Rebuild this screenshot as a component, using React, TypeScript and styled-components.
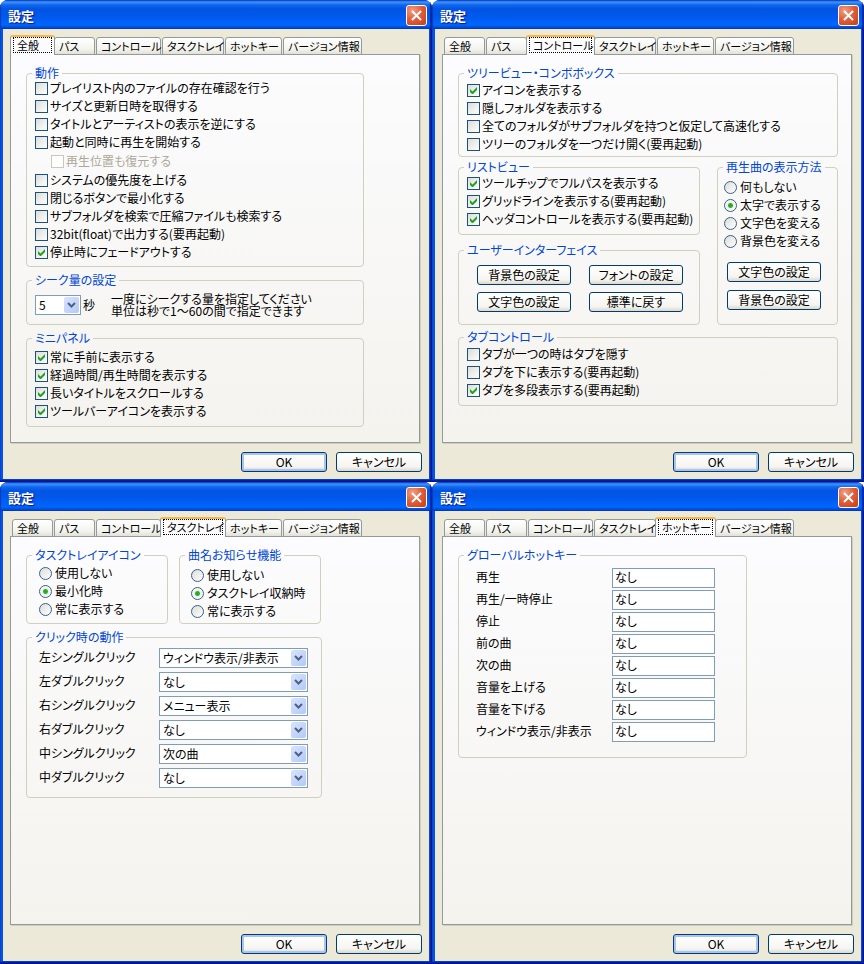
import React, { useId } from "react";
import styled, { createGlobalStyle, css } from "styled-components";

const GlobalStyle = createGlobalStyle`
  *, *::before, *::after { box-sizing: border-box; }
  body {
    margin: 0;
    background: #ffffff;
    color: #000000;
    font: 12px/18px "Noto Sans CJK JP", "Liberation Sans", sans-serif;
    font-feature-settings: "palt";
  }
  button, input, select {
    margin: 0;
    color: inherit;
    font: inherit;
    font-feature-settings: inherit;
  }
`;

const Desktop = styled.main`
  display: grid;
  grid-template-columns: repeat(2, minmax(0, 1fr));
  grid-auto-rows: 1fr;
  min-height: 100vh;
`;

const WindowFrame = styled.section`
  display: flex;
  flex-direction: column;
  border-radius: 8px 8px 0 0;
  overflow: hidden;
  background:
    linear-gradient(to top, #00138c 1px, #0029b0 2px, transparent 3px),
    linear-gradient(
      to right,
      #0831d9 0,
      #0855dd 1px,
      #0855dd calc(100% - 3px),
      #0441d8 calc(100% - 2px),
      #00138c calc(100% - 1px)
    );
`;

const TitleBar = styled.header`
  display: flex;
  align-items: center;
  justify-content: space-between;
  height: 29px;
  padding: 2px 5px 0 8px;
  background: linear-gradient(
    #0a3ab8 0,
    #3d95ff 2px,
    #1265ee 5px,
    #0054e3 9px,
    #0058ea 16px,
    #0066ff 25px,
    #0050dc 27px,
    #003cc0 29px
  );
  box-shadow: inset -2px 0 1px #0029a8, inset 1px 0 1px #0a3ab8;
`;

const WindowTitle = styled.h1`
  margin: 0;
  color: #ffffff;
  font-size: 13px;
  line-height: 18px;
  font-weight: 700;
  text-shadow: 1px 1px 1px #0a1883;
`;

const CloseButton = styled.button`
  display: grid;
  place-items: center;
  width: 21px;
  height: 21px;
  padding: 0;
  border: 1px solid #ffffff;
  border-radius: 3px;
  background: radial-gradient(circle at 30% 25%, #f0a088 0, #e0603c 45%, #c83c14 100%);
`;

const Client = styled.div`
  display: flex;
  flex: 1;
  flex-direction: column;
  margin: 0 3px 3px;
  padding: 6px 7px 7px;
  background: #ece9d8;
`;

const TabList = styled.div`
  display: flex;
  align-items: flex-end;
  height: 20px;
  margin: 0 2px -1px;
  position: relative;
`;

const Tab = styled.button<{ $width: number; $active: boolean }>`
  flex: none;
  width: ${(p) => p.$width}px;
  height: 18px;
  margin-right: 1px;
  padding: 0 0 0 4px;
  border: 1px solid #919b9c;
  border-radius: 3px 3px 0 0;
  background: linear-gradient(#ffffff, #f3f3ee 70%, #e2e1d6);
  font-size: 11px;
  line-height: 16px;
  text-align: left;
  white-space: nowrap;

  ${(p) =>
    p.$active &&
    css`
      width: ${p.$width + 4}px;
      height: 20px;
      margin: 0 -1px 0 -2px;
      padding: 0 2px 2px;
      border-top: 2px solid #ffb636;
      border-bottom: 0;
      background: #fcfcfe;
      line-height: 14px;
      z-index: 1;
    `}
`;

const FocusRing = styled.span`
  display: block;
  padding-left: 3px;
  border: 1px dotted #000000;
`;

const Panel = styled.div<{ $right: number }>`
  display: flex;
  flex: 1;
  flex-direction: column;
  align-items: stretch;
  margin-right: 2px;
  padding: 12px ${(p) => p.$right}px 12px 15px;
  border: 1px solid #919b9c;
  background: linear-gradient(#fcfcfe, #f4f3ee);
  box-shadow: 1px 1px 0 #d0cebf;
`;

const Footer = styled.footer`
  display: flex;
  justify-content: flex-end;
  gap: 9px;
  margin-top: 9px;
`;

const PushButton = styled.button<{ $width: number; $primary?: boolean }>`
  width: ${(p) => p.$width}px;
  height: 20px;
  padding: 0;
  border: 1px solid #003c74;
  border-radius: 3px;
  background: linear-gradient(#ffffff, #f6f5f1 75%, #dcd8cc);
  line-height: 16px;
  text-align: center;
  box-shadow: ${(p) => (p.$primary ? "inset 0 0 0 2px #a9c4f0" : "none")};
`;

const GroupBox = styled.fieldset<{ $gap?: number; $width?: number }>`
  min-width: 0;
  width: ${(p) => (p.$width ? `${p.$width}px` : "auto")};
  margin: ${(p) => p.$gap ?? 0}px 0 0;
  padding: 0 5px;
  border: 1px solid #d0d0bf;
  border-radius: 4px;
`;

const GroupTitle = styled.legend`
  height: 12px;
  padding: 0 3px;
  color: #0046d5;
  line-height: 12px;
`;

const Stack = styled.div<{ $top?: number; $bottom?: number; $left?: number }>`
  display: flex;
  flex-direction: column;
  padding: ${(p) => p.$top ?? 0}px 0 ${(p) => p.$bottom ?? 0}px ${(p) => p.$left ?? 3}px;
`;

const OptionLabel = styled.label<{ $sub?: boolean; $gap: number }>`
  display: flex;
  align-items: center;
  gap: ${(p) => p.$gap}px;
  height: ${(p) => (p.$sub ? 20 : 18)}px;
  padding-left: ${(p) => (p.$sub ? 16 : 0)}px;
  color: ${(p) => (p.$sub ? "#aca899" : "#000000")};
  white-space: nowrap;
`;

const TickFrame = styled.span`
  display: grid;
  flex: none;
  width: 13px;
  height: 13px;

  > * {
    grid-area: 1 / 1;
  }

  svg {
    visibility: hidden;
    pointer-events: none;
  }

  input:checked + svg {
    visibility: visible;
  }
`;

const TickBox = styled.input`
  appearance: none;
  width: 13px;
  height: 13px;
  border: 1px solid #1c5180;
  background: linear-gradient(135deg, #dcdcd7, #ffffff);

  &:disabled {
    border-color: #cac8bb;
    background: #ffffff;
  }
`;

const RadioDot = styled.input`
  appearance: none;
  flex: none;
  width: 13px;
  height: 13px;
  border: 1px solid #3a5f8c;
  border-radius: 50%;
  background: linear-gradient(135deg, #dcdcd7, #ffffff);

  &:checked {
    background: radial-gradient(circle, #21a121 0, #35b035 2px, #e9f1e6 3px, #f8faf6 5px);
  }
`;

const ComboFrame = styled.span<{ $width: number }>`
  display: grid;
  align-items: center;
  justify-items: end;
  width: ${(p) => p.$width}px;
  height: 20px;

  > * {
    grid-area: 1 / 1;
  }
`;

const ComboSelect = styled.select`
  appearance: none;
  width: 100%;
  height: 20px;
  padding: 0 18px 0 3px;
  border: 1px solid #7f9db9;
  border-radius: 0;
  background: #ffffff;
  line-height: 18px;
`;

const ComboArrow = styled.span`
  display: grid;
  place-items: center;
  width: 15px;
  height: 16px;
  margin-right: 2px;
  border-radius: 2px;
  background: linear-gradient(135deg, #d8e4ff, #b4c8f6);
  pointer-events: none;
`;

const SeekRow = styled.div`
  display: flex;
  align-items: center;
  padding: 7px 0 7px 3px;
`;

const UnitLabel = styled.label`
  padding-left: 2px;
`;

const SeekHint = styled.p`
  margin: 0 0 0 16px;
  line-height: 12px;
  white-space: nowrap;
`;

const ColumnPair = styled.div<{ $template: string; $gap: number; $top?: number }>`
  display: grid;
  grid-template-columns: ${(p) => p.$template};
  column-gap: ${(p) => p.$gap}px;
  margin-top: ${(p) => p.$top ?? 0}px;
`;

const ButtonGrid = styled.div`
  display: grid;
  grid-template-columns: repeat(2, 94px);
  gap: 7px 18px;
  padding: 9px 0 12px 13px;
`;

const ButtonColumn = styled.div`
  display: flex;
  flex-direction: column;
  gap: 8px;
  padding: 12px 0 0 3px;
`;

const FieldTable = styled.div<{ $label: number; $gap: number; $pad: string }>`
  display: grid;
  grid-template-columns: ${(p) => p.$label}px auto;
  grid-auto-rows: 20px;
  row-gap: ${(p) => p.$gap}px;
  justify-content: start;
  padding: ${(p) => p.$pad};
`;

const FieldLabel = styled.label`
  line-height: 18px;
  white-space: nowrap;
`;

const HotkeyInput = styled.input`
  width: 103px;
  height: 20px;
  padding: 0 2px 3px;
  border: 1px solid #7f9db9;
  background: #ffffff;
`;

const TABS = [
  { name: "全般", width: 41 },
  { name: "パス", width: 41 },
  { name: "コントロール", width: 65 },
  { name: "タスクトレイ", width: 62 },
  { name: "ホットキー", width: 57 },
  { name: "バージョン情報", width: 79 },
];

interface CheckProps {
  label: string;
  checked?: boolean;
  sub?: boolean;
}

function Check({ label, checked, sub }: CheckProps) {
  return (
    <OptionLabel $sub={sub} $gap={2}>
      <TickFrame>
        <TickBox type="checkbox" defaultChecked={checked} disabled={sub} />
        <svg width="13" height="13" viewBox="0 0 13 13" aria-hidden="true">
          <path d="M3 5v3l2 2h1l4-4V3L5.5 7.5z" fill="#21a121" />
        </svg>
      </TickFrame>
      {label}
    </OptionLabel>
  );
}

function RadioList({ options, selected }: { options: string[]; selected: number }) {
  const name = useId();
  return (
    <>
      {options.map((option, i) => (
        <OptionLabel key={option} $gap={3}>
          <RadioDot type="radio" name={name} defaultChecked={i === selected} />
          {option}
        </OptionLabel>
      ))}
    </>
  );
}

interface ComboProps {
  id: string;
  width: number;
  value: string;
  options: string[];
}

function Combo({ id, width, value, options }: ComboProps) {
  return (
    <ComboFrame $width={width}>
      <ComboSelect id={id} defaultValue={value}>
        {options.map((option) => (
          <option key={option}>{option}</option>
        ))}
      </ComboSelect>
      <ComboArrow>
        <svg width="9" height="6" viewBox="0 0 9 6" aria-hidden="true">
          <path d="M1 1l3.5 3.5L8 1" fill="none" stroke="#4d6185" strokeWidth="2" />
        </svg>
      </ComboArrow>
    </ComboFrame>
  );
}

interface DialogProps {
  active: number;
  right: number;
  children: React.ReactNode;
}

function Dialog({ active, right, children }: DialogProps) {
  return (
    <WindowFrame>
      <TitleBar>
        <WindowTitle>設定</WindowTitle>
        <CloseButton type="button" aria-label="閉じる">
          <svg width="13" height="13" viewBox="0 0 13 13" aria-hidden="true">
            <path d="M2 2l9 9M11 2l-9 9" stroke="#ffffff" strokeWidth="2" />
          </svg>
        </CloseButton>
      </TitleBar>
      <Client>
        <TabList role="tablist">
          {TABS.map((tab, i) => (
            <Tab
              key={tab.name}
              type="button"
              role="tab"
              aria-selected={i === active}
              $width={tab.width}
              $active={i === active}
            >
              {i === active ? <FocusRing>{tab.name}</FocusRing> : tab.name}
            </Tab>
          ))}
        </TabList>
        <Panel role="tabpanel" $right={right}>
          {children}
        </Panel>
        <Footer>
          <PushButton type="button" $width={86} $primary>
            OK
          </PushButton>
          <PushButton type="button" $width={86}>
            キャンセル
          </PushButton>
        </Footer>
      </Client>
    </WindowFrame>
  );
}

function GeneralPage() {
  return (
    <>
      <GroupBox>
        <GroupTitle>動作</GroupTitle>
        <Stack $bottom={5}>
          <Check label="プレイリスト内のファイルの存在確認を行う" />
          <Check label="サイズと更新日時を取得する" />
          <Check label="タイトルとアーティストの表示を逆にする" />
          <Check label="起動と同時に再生を開始する" />
          <Check label="再生位置も復元する" sub />
          <Check label="システムの優先度を上げる" />
          <Check label="閉じるボタンで最小化する" />
          <Check label="サブフォルダを検索で圧縮ファイルも検索する" />
          <Check label="32bit(float)で出力する(要再起動)" />
          <Check label="停止時にフェードアウトする" checked />
        </Stack>
      </GroupBox>
      <GroupBox $gap={7}>
        <GroupTitle>シーク量の設定</GroupTitle>
        <SeekRow>
          <Combo id="seek" width={46} value="5" options={["1", "5", "10", "30", "60"]} />
          <UnitLabel htmlFor="seek">秒</UnitLabel>
          <SeekHint>
            一度にシークする量を指定してください
            <br />
            単位は秒で1～60の間で指定できます
          </SeekHint>
        </SeekRow>
      </GroupBox>
      <GroupBox $gap={7}>
        <GroupTitle>ミニパネル</GroupTitle>
        <Stack $top={4} $bottom={6}>
          <Check label="常に手前に表示する" checked />
          <Check label="経過時間/再生時間を表示する" checked />
          <Check label="長いタイトルをスクロールする" checked />
          <Check label="ツールバーアイコンを表示する" checked />
        </Stack>
      </GroupBox>
    </>
  );
}

function ControlPage() {
  return (
    <>
      <GroupBox>
        <GroupTitle>ツリービュー・コンボボックス</GroupTitle>
        <Stack $top={2} $bottom={3}>
          <Check label="アイコンを表示する" checked />
          <Check label="隠しフォルダを表示する" />
          <Check label="全てのフォルダがサブフォルダを持つと仮定して高速化する" />
          <Check label="ツリーのフォルダを一つだけ開く(要再起動)" />
        </Stack>
      </GroupBox>
      <ColumnPair $template="minmax(0, 2fr) minmax(0, 1fr)" $gap={17} $top={4}>
        <div>
          <GroupBox>
            <GroupTitle>リストビュー</GroupTitle>
            <Stack $top={1} $bottom={6}>
              <Check label="ツールチップでフルパスを表示する" checked />
              <Check label="グリッドラインを表示する(要再起動)" checked />
              <Check label="ヘッダコントロールを表示する(要再起動)" checked />
            </Stack>
          </GroupBox>
          <GroupBox $gap={9}>
            <GroupTitle>ユーザーインターフェイス</GroupTitle>
            <ButtonGrid>
              <PushButton type="button" $width={94}>背景色の設定</PushButton>
              <PushButton type="button" $width={94}>フォントの設定</PushButton>
              <PushButton type="button" $width={94}>文字色の設定</PushButton>
              <PushButton type="button" $width={94}>標準に戻す</PushButton>
            </ButtonGrid>
          </GroupBox>
        </div>
        <GroupBox>
          <GroupTitle>再生曲の表示方法</GroupTitle>
          <Stack $top={5} $left={1}>
            <RadioList
              options={["何もしない", "太字で表示する", "文字色を変える", "背景色を変える"]}
              selected={1}
            />
            <ButtonColumn>
              <PushButton type="button" $width={94}>文字色の設定</PushButton>
              <PushButton type="button" $width={94}>背景色の設定</PushButton>
            </ButtonColumn>
          </Stack>
        </GroupBox>
      </ColumnPair>
      <GroupBox $gap={6}>
        <GroupTitle>タブコントロール</GroupTitle>
        <Stack $top={2} $bottom={6}>
          <Check label="タブが一つの時はタブを隠す" />
          <Check label="タブを下に表示する(要再起動)" />
          <Check label="タブを多段表示する(要再起動)" checked />
        </Stack>
      </GroupBox>
    </>
  );
}

const CLICK_ACTIONS = [
  ["左シングルクリック", "ウィンドウ表示/非表示"],
  ["左ダブルクリック", "なし"],
  ["右シングルクリック", "メニュー表示"],
  ["右ダブルクリック", "なし"],
  ["中シングルクリック", "次の曲"],
  ["中ダブルクリック", "なし"],
];

const ACTION_CHOICES = ["なし", "ウィンドウ表示/非表示", "メニュー表示", "次の曲"];

function TrayPage() {
  return (
    <>
      <ColumnPair $template="142px 142px" $gap={11}>
        <GroupBox>
          <GroupTitle>タスクトレイアイコン</GroupTitle>
          <Stack $top={3} $bottom={5} $left={7}>
            <RadioList options={["使用しない", "最小化時", "常に表示する"]} selected={1} />
          </Stack>
        </GroupBox>
        <GroupBox>
          <GroupTitle>曲名お知らせ機能</GroupTitle>
          <Stack $top={5} $bottom={3} $left={6}>
            <RadioList options={["使用しない", "タスクトレイ収納時", "常に表示する"]} selected={1} />
          </Stack>
        </GroupBox>
      </ColumnPair>
      <GroupBox $gap={7} $width={296}>
        <GroupTitle>クリック時の動作</GroupTitle>
        <FieldTable $label={120} $gap={4} $pad="5px 0 9px 7px">
          {CLICK_ACTIONS.map(([label, value], i) => (
            <React.Fragment key={label}>
              <FieldLabel htmlFor={`click-${i}`}>{label}</FieldLabel>
              <Combo id={`click-${i}`} width={149} value={value} options={ACTION_CHOICES} />
            </React.Fragment>
          ))}
        </FieldTable>
      </GroupBox>
    </>
  );
}

const HOTKEYS = [
  "再生",
  "再生/一時停止",
  "停止",
  "前の曲",
  "次の曲",
  "音量を上げる",
  "音量を下げる",
  "ウィンドウ表示/非表示",
];

function HotkeyPage() {
  return (
    <GroupBox $width={289}>
      <GroupTitle>グローバルホットキー</GroupTitle>
      <FieldTable $label={136} $gap={2} $pad="7px 0 15px 12px">
        {HOTKEYS.map((label, i) => (
          <React.Fragment key={label}>
            <FieldLabel htmlFor={`hotkey-${i}`}>{label}</FieldLabel>
            <HotkeyInput id={`hotkey-${i}`} type="text" defaultValue="なし" />
          </React.Fragment>
        ))}
      </FieldTable>
    </GroupBox>
  );
}

export default function App() {
  return (
    <>
      <GlobalStyle />
      <Desktop>
        <Dialog active={0} right={55}>
          <GeneralPage />
        </Dialog>
        <Dialog active={2} right={13}>
          <ControlPage />
        </Dialog>
        <Dialog active={3} right={13}>
          <TrayPage />
        </Dialog>
        <Dialog active={4} right={13}>
          <HotkeyPage />
        </Dialog>
      </Desktop>
    </>
  );
}
